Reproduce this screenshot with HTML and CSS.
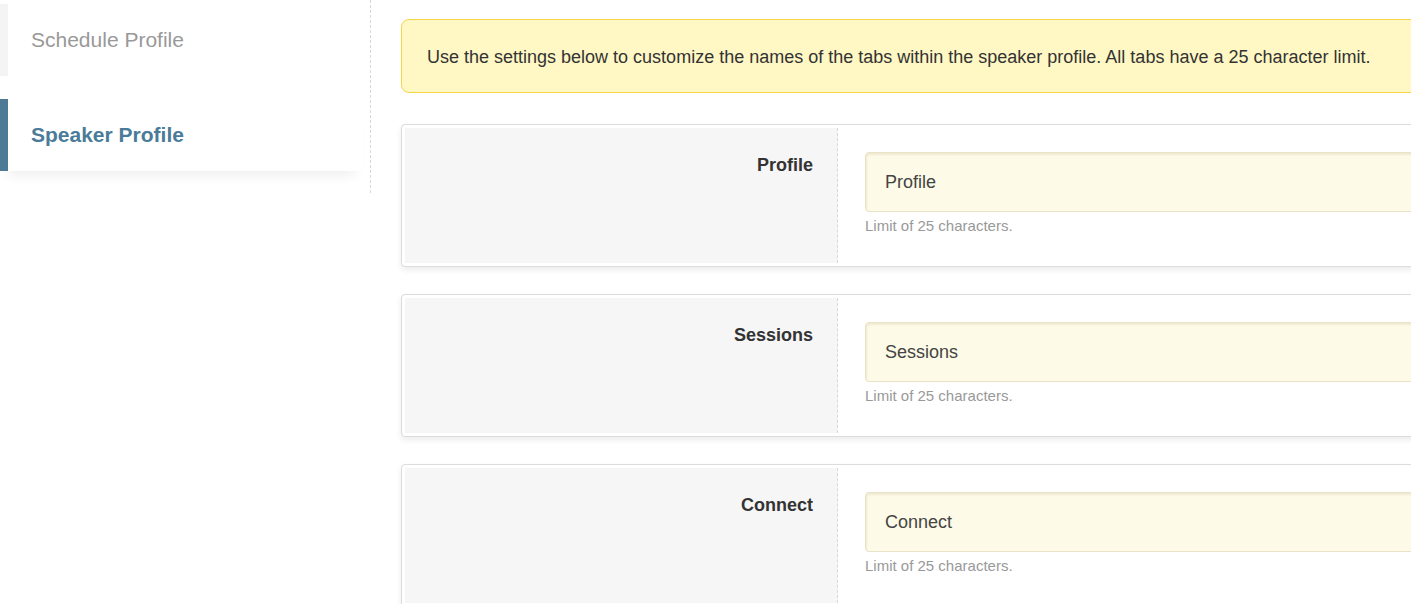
FILE: index.html
```html
<!DOCTYPE html>
<html>
<head>
<meta charset="utf-8">
<link rel="stylesheet" href="styles.css">
</head>
<body>
<div class="page">
  <aside class="sidebar">
    <div class="nav-item">Schedule Profile</div>
    <div class="nav-item active">Speaker Profile</div>
  </aside>
  <main class="main">
    <div class="alert">Use the settings below to customize the names of the tabs within the speaker profile. All tabs have a 25 character limit.</div>
    <div class="card">
      <div class="card-label">Profile</div>
      <div class="card-field">
        <div class="input">Profile</div>
        <div class="help">Limit of 25 characters.</div>
      </div>
    </div>
    <div class="card">
      <div class="card-label">Sessions</div>
      <div class="card-field">
        <div class="input">Sessions</div>
        <div class="help">Limit of 25 characters.</div>
      </div>
    </div>
    <div class="card">
      <div class="card-label">Connect</div>
      <div class="card-field">
        <div class="input">Connect</div>
        <div class="help">Limit of 25 characters.</div>
      </div>
    </div>
  </main>
</div>
</body>
</html>
```
FILE: styles.css
```css
html, body {
  margin: 0;
  padding: 0;
  background: #fff;
  overflow: hidden;
  font-family: "Liberation Sans", Arial, sans-serif;
  color: #333;
}
.page {
  display: flex;
  align-items: flex-start;
  width: 1600px;
}
.sidebar {
  width: 370px;
  flex: none;
  padding: 4px 0 22px 0;
  border-right: 1px dashed #d8d8d8;
  display: flex;
  flex-direction: column;
  gap: 23px;
}
.nav-item {
  width: 362px;
  height: 72px;
  box-sizing: border-box;
  border-left: 8px solid #f4f4f4;
  padding-left: 23px;
  display: flex;
  align-items: center;
  font-size: 21px;
  color: #999;
  background: #fff;
}
.nav-item.active {
  border-left-color: #4d7a94;
  color: #4a7b98;
  font-weight: bold;
  box-shadow: 0 12px 12px -8px rgba(0, 0, 0, 0.07);
}
.main {
  margin-left: 30px;
  padding-top: 19px;
  width: 1150px;
  display: flex;
  flex-direction: column;
  gap: 27px;
}
.alert {
  box-sizing: border-box;
  height: 74px;
  margin-bottom: 4px;
  background: #fff8c4;
  border: 1px solid #f8d447;
  border-radius: 8px;
  padding: 2px 25px 0 25px;
  display: flex;
  align-items: center;
  font-size: 18px;
  color: #333;
}
.card {
  box-sizing: border-box;
  height: 143px;
  border: 1px solid #dcdcdc;
  border-radius: 4px;
  padding: 3px;
  display: flex;
  background: #fff;
  box-shadow: 0 3px 6px rgba(0, 0, 0, 0.08);
}
.card-label {
  width: 433px;
  flex: none;
  box-sizing: border-box;
  background: #f6f6f6;
  border-right: 1px dashed #d8d8d8;
  text-align: right;
  padding: 27px 24px 0 0;
  font-weight: bold;
  font-size: 18px;
  color: #333;
}
.card-field {
  flex: 1;
  padding: 24px 0 0 27px;
}
.input {
  box-sizing: border-box;
  height: 60px;
  background: #fdfae7;
  border: 1px solid #e9e2c6;
  border-radius: 4px;
  padding: 0 19px;
  display: flex;
  align-items: center;
  font-size: 18px;
  color: #444;
  box-shadow: inset 1px 2px 2px rgba(120, 100, 40, 0.1);
}
.help {
  margin-top: 5px;
  font-size: 15px;
  color: #999;
}
```
